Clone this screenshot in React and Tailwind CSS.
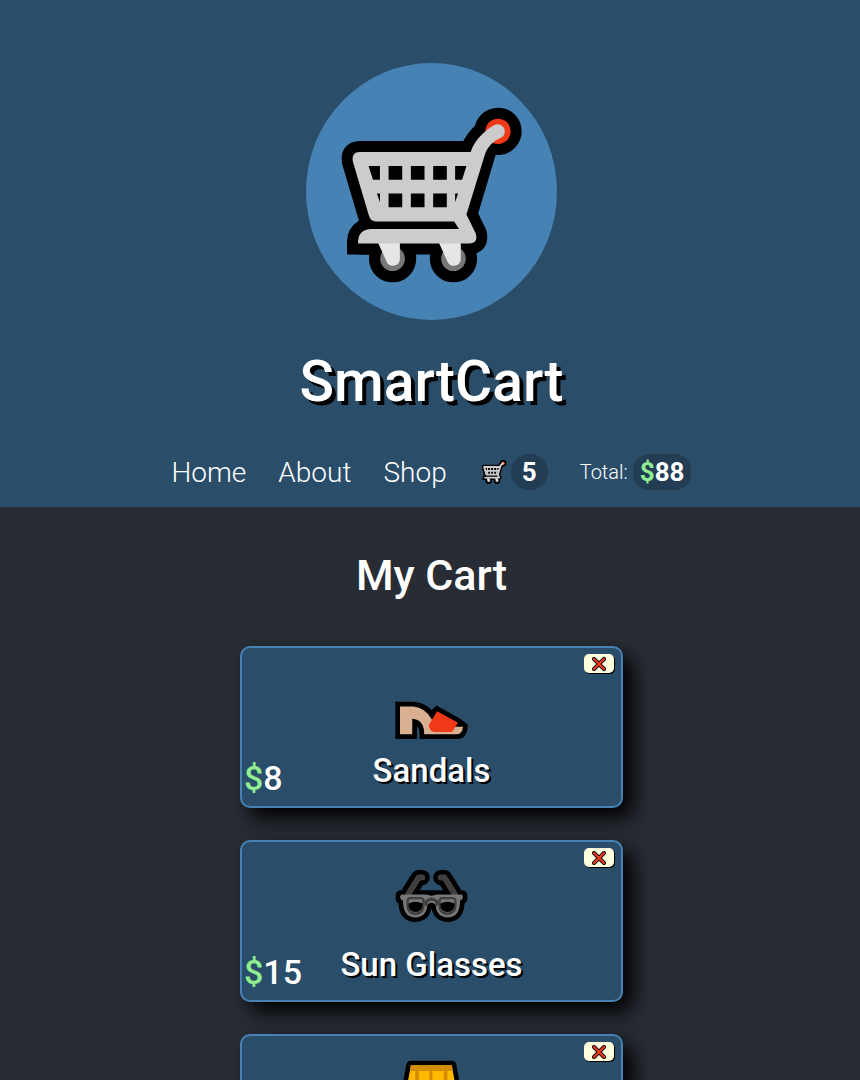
import React from "react";

function CartIcon({ className }) {
  return (
    <svg viewBox="123 155 544 529" className={className} aria-hidden="true">
      <g fill="#000" stroke="#000" strokeWidth="66" strokeLinejoin="round">
        <path d="M180 290H513C522 262 545 232 583 210A20 20 0 0 1 605 247C580 258 560 270 553 300L500 478L528 535Q536 565 508 565H178Q178 522 215 522H478L463 499H228Q212 499 207 482L159 320Q153 290 180 290Z" />
        <circle cx="278" cy="611" r="38" />
        <circle cx="461" cy="611" r="38" />
        <circle cx="595" cy="228" r="38" />
      </g>
      <path d="M141 598V560Q141 520 176 497H240V598Z" />
      <circle cx="595" cy="228" r="38" fill="#f03a17" />
      <circle cx="278" cy="611" r="37" fill="#777" />
      <circle cx="461" cy="611" r="37" fill="#777" />
      <path fill="#e6e6e6" d="M233 560H300V611A21 21 0 0 1 260 620ZM416 560H483V611A21 21 0 0 1 443 620Z" />
      <path fill="#ccc" d="M180 290H513C522 262 545 232 583 210A20 20 0 0 1 605 247C580 258 562 274 553 306L500 478L528 535Q536 565 508 565H174Q174 522 215 522H478L463 499H228Q212 499 207 482L159 320Q153 290 180 290Z" />
      <path d="M206 332H240V374H219ZM266 332H307V374H266ZM333 332H374V374H333ZM400 332H441V374H400ZM466 332H500L487 374H466ZM231 415H240V441ZM266 415H307V456H266ZM333 415H374V456H333ZM400 415H441V456H400ZM466 415H475L466 441Z" />
    </svg>
  );
}

function SandalIcon() {
  return (
    <svg viewBox="495 85 220 220" className="size-[73px]" aria-hidden="true">
      <path stroke="#000" strokeWidth="28" d="M510 201H550Q582 202 604 232L622 215L685 250L700 262Q698 285 680 285H583Q583 240 547 238V285H510Z" />
      <path fill="#d9b092" d="M510 201H550Q586 204 606 240L622 262H700Q698 285 680 285H583Q583 240 547 238V285H510Z" />
      <path fill="#f03a17" d="M622 215L685 250L667 278H612Q598 274 597 256Z" />
    </svg>
  );
}

function GlassesIcon() {
  return (
    <svg viewBox="30 5 220 220" className="size-[73px]" aria-hidden="true">
      <g stroke="#000" strokeWidth="30" strokeLinejoin="round" strokeLinecap="round">
        <path fill="none" strokeWidth="46" d="M72 98L101 52H112M208 98L179 52H168" />
        <path d="M47 105H233V116L225 119Q226 171 190 171Q156 169 154 133Q140 120 126 133Q124 169 90 171Q54 171 55 119L47 116Z" />
      </g>
      <path fill="none" stroke="#3f3f3f" strokeWidth="18" strokeLinecap="round" strokeLinejoin="round" d="M70 102L101 52H112M210 102L179 52H168" />
      <path fill="#777" d="M49 103H125Q140 110 155 103H231Q238 111 231 119L226 121Q226 171 190 172Q154 170 153 135Q140 120 127 135Q126 170 90 172Q54 171 54 121L49 119Q42 111 49 103Z" />
      <path fill="none" stroke="#3f3f3f" strokeWidth="9" d="M124 136V124Q140 110 156 124V136" />
      <path fill="#777" stroke="#3f3f3f" strokeWidth="7" d="M77 114H108Q116 114 116 124V134Q116 161 92 161Q68 161 68 134V124Q68 114 77 114ZM172 114H203Q212 114 212 124V134Q212 161 188 161Q164 161 164 134V124Q164 114 172 114Z" />
      <path d="M71 130Q92 119 113 130V136Q112 155 92 156Q72 155 71 136ZM167 130Q188 119 209 130V136Q208 155 188 156Q168 155 167 136Z" />
    </svg>
  );
}

function ShortsIcon() {
  return (
    <svg viewBox="45 93 220 220" className="size-[73px]" aria-hidden="true">
      <path fill="#ffb900" stroke="#000" strokeWidth="28" strokeLinejoin="round" d="M93 121H216L242 265H174L155 195L136 265H66Z" />
      <path fill="#ffb900" d="M93 121H216L242 265H174L155 195L136 265H66Z" />
      <path fill="#d48c00" d="M93 121H216L219 138H90ZM106 138H117V262H106ZM149 138H158V200H149ZM192 138H203V262H192Z" />
    </svg>
  );
}

function RemoveIcon() {
  return (
    <svg viewBox="0 0 42 42" className="size-[14px]" aria-hidden="true">
      <path d="M6 6L36 36M36 6L6 36" stroke="#000" strokeWidth="12" strokeLinecap="round" />
      <path d="M6 6L36 36M36 6L6 36" stroke="#f03a17" strokeWidth="7" strokeLinecap="round" />
    </svg>
  );
}

const items = [
  { name: "Sandals", price: 8, Icon: SandalIcon },
  { name: "Sun Glasses", price: 15, Icon: GlassesIcon },
  { Icon: ShortsIcon },
];

function CartItem({ name, price, Icon }) {
  return (
    <li className="relative flex min-h-[162px] w-[383px] max-w-full flex-col items-center rounded-[10px] border-2 border-[#4682b4] bg-[#2a4d69] pt-5 shadow-[10px_10px_20px_#000]">
      <button
        type="button"
        aria-label="Remove item"
        className="absolute top-[6px] right-[7px] flex h-[19px] w-[30px] items-center justify-center rounded-[5px] bg-[#ffffe0] shadow-[1px_1px_0_#000]"
      >
        <RemoveIcon />
      </button>
      <Icon />
      {name && (
        <>
          <h3 className="mt-[6px] text-[33px] leading-[48px] font-medium [text-shadow:2px_2px_0_#000]">{name}</h3>
          <p className="absolute bottom-2 left-[2px] text-[34px] leading-10 font-medium">
            <span className="text-[#90ee90]">$</span>
            {price}
          </p>
        </>
      )}
    </li>
  );
}

export default function App() {
  return (
    <div className="h-screen overflow-y-auto bg-[#282c34] font-['Roboto',sans-serif] text-white [scrollbar-width:none]">
      <header className="flex flex-col items-center bg-[#2a4d69] pt-[63px] pb-[15px] pl-[3px]">
        <div className="flex h-[257px] w-[251px] items-center justify-center rounded-[50%] bg-[#4682b4] pt-[6px]">
          <CartIcon className="h-[176px] w-[181px]" />
        </div>
        <h1 className="mt-6 text-[57px] leading-[76px] font-medium [text-shadow:4px_4px_0_#000]">SmartCart</h1>
        <nav className="mt-8 flex items-center text-[28px] leading-[38px] font-light">
          <a href="#home" className="pt-[2px]">Home</a>
          <a href="#about" className="ml-8 pt-[2px]">About</a>
          <a href="#shop" className="ml-8 pt-[2px]">Shop</a>
          <a href="#cart" aria-label="Cart" className="ml-[34px] flex items-center gap-1">
            <CartIcon className="h-6 w-[26px]" />
            <span className="flex h-9 w-[37px] items-center justify-center rounded-[18px] bg-[#233e54] text-[26px] font-bold">5</span>
          </a>
          <p className="ml-8 flex items-center gap-[5px] text-[20px]">
            Total:
            <span className="flex h-9 items-center rounded-2xl bg-[#233e54] px-[7px] text-[26px] font-bold">
              <span className="text-[#90ee90]">$</span>88
            </span>
          </p>
        </nav>
      </header>
      <main className="flex flex-col items-center pt-[38px] pb-8 pl-[3px]">
        <h2 className="text-[43px] leading-[60px] font-medium">My Cart</h2>
        <ul className="mt-[41px] flex max-w-full flex-col items-center gap-8">
          {items.map((item, i) => (
            <CartItem key={i} {...item} />
          ))}
        </ul>
      </main>
    </div>
  );
}
